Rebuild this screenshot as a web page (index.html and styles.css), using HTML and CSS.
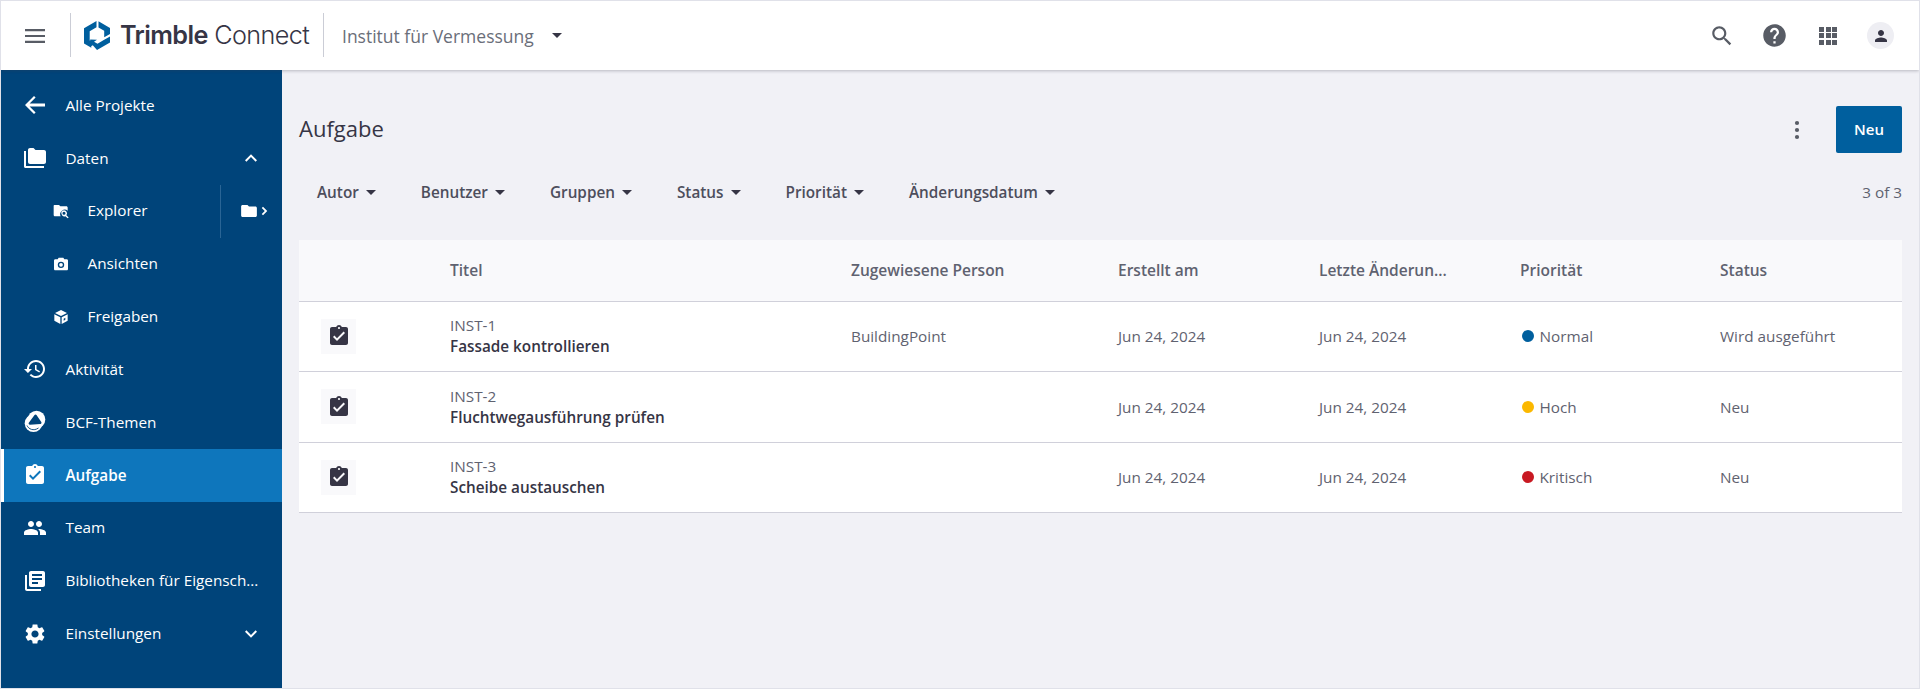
FILE: index.html
```html
<!DOCTYPE html>
<html lang="de">
<head>
<meta charset="utf-8">
<title>Trimble Connect</title>
<link rel="stylesheet" href="styles.css">
</head>
<body>
<div class="app">
  <header class="topbar">
    <button class="menu-btn" aria-label="Menü"><svg class="ic-24" viewBox="0 0 24 24"><path d="M2 19h20v-2.2H2V19zm0-5.9h20v-2.2H2v2.2zM2 5v2.2h20V5H2z"/></svg></button>
    <div class="brand">
      <svg class="logo" viewBox="0 0 26 29"><path d="M12.500 0 0 7.300v15.200l7.300 4.200v-6.300l-1.600-1V10.200l6.800-3.900zM14.500.3v6.100l5.700 3.300v6.600L26 13V7zM26 15.500l-5.800 3.300-6.700 3.900-3.500-2 3-2-6.800-.3v7.300l2.600-1.500L13 29l13-7.500z"/></svg>
      <span class="brand-text"><b>Trimble</b> Connect</span>
    </div>
    <div class="project"><span>Institut für Vermessung</span><i class="caret caret-lg"></i></div>
    <div class="top-actions">
      <svg class="ic-search" viewBox="0 0 24 24"><path d="M15.5 14h-.79l-.28-.27C15.41 12.59 16 11.11 16 9.5 16 5.91 13.09 3 9.5 3S3 5.91 3 9.5 5.91 16 9.5 16c1.61 0 3.09-.59 4.23-1.57l.27.28v.79l5 4.99L20.49 19l-4.99-5zm-6 0C7.01 14 5 11.99 5 9.5S7.01 5 9.5 5 14 7.01 14 9.5 11.99 14 9.5 14z"/></svg>
      <svg class="ic-help" viewBox="0 0 24 24"><path d="M12 2C6.48 2 2 6.48 2 12s4.48 10 10 10 10-4.48 10-10S17.52 2 12 2zm1 17h-2v-2h2v2zm2.07-7.75l-.9.92C13.45 12.9 13 13.5 13 15h-2v-.5c0-1.1.45-2.1 1.17-2.83l1.24-1.26c.37-.36.59-.86.59-1.41 0-1.1-.9-2-2-2s-2 .9-2 2H8c0-2.21 1.79-4 4-4s4 1.79 4 4c0 .88-.36 1.68-.93 2.25z"/></svg>
      <div class="apps-grid"><i></i><i></i><i></i><i></i><i></i><i></i><i></i><i></i><i></i></div>
      <div class="avatar"><svg viewBox="0 0 24 24"><path d="M12 12c2.21 0 4-1.79 4-4s-1.79-4-4-4-4 1.79-4 4 1.79 4 4 4zm0 2c-2.67 0-8 1.34-8 4v2h16v-2c0-2.66-5.33-4-8-4z"/></svg></div>
    </div>
  </header>

  <nav class="sidebar">
    <a class="nav-item"><svg class="nav-ic" viewBox="0 0 24 24"><path d="M22 10.6H6.6l6-6L11 3 2 12l9 9 1.6-1.6-6-6H22z"/></svg><span class="nav-label">Alle Projekte</span></a>
    <a class="nav-item"><svg class="nav-ic" viewBox="0 0 24 24"><path d="M1 5v15.5C1 21.3 1.7 22 2.5 22H21v-2H3V5zM7 2C5.9 2 5 2.9 5 4v12c0 1.1.9 2 2 2h14c1.1 0 2-.9 2-2V6c0-1.1-.9-2-2-2h-8.5l-2-2z"/></svg><span class="nav-label">Daten</span><svg class="chev" viewBox="0 0 24 24"><path d="M12 7l-8 8 1.900 1.900 6.100-6.100 6.100 6.100L20 15z"/></svg></a>
    <a class="nav-item sub explorer">
      <svg class="sub-ic" viewBox="0 0 24 24"><path fill-rule="evenodd" d="M2 3h7l2 2h9c1 0 2 1 2 2v4.500a7 7 0 0 0-10.600 8.500H3c-1 0-2-1-2-2V4c0-.6.4-1 1-1zM16.500 11a4.500 4.500 0 0 1 3.600 7.200L23.500 21.600 22 23l-3.400-3.300A4.500 4.500 0 1 1 16.500 11zm0 2.200a2.300 2.300 0 1 0 0 4.600 2.300 2.300 0 0 0 0-4.600z"/></svg>
      <span class="nav-label">Explorer</span>
      <span class="tree-toggle"><svg class="tree-folder" viewBox="0 0 24 24"><path d="M10 4H3.500C2.300 4 1.500 4.900 1.500 6v12c0 1.100.8 2 2 2h17c1.200 0 2-.9 2-2V8c0-1.100-.8-2-2-2H12z"/></svg><svg class="tree-chev" viewBox="0 0 24 24"><path d="M8 3.500 5.500 6l6 6-6 6L8 20.500 16.500 12z"/></svg></span>
    </a>
    <a class="nav-item sub"><svg class="sub-ic" viewBox="0 0 24 24"><path fill-rule="evenodd" d="M8.500 2.500 7 5H3.500C2.300 5 1.500 5.900 1.500 7v12.500c0 1.100.8 2 2 2h17c1.200 0 2-.9 2-2V7c0-1.100-.8-2-2-2H17l-1.500-2.500zM12 8.500a4.800 4.800 0 1 1 0 9.600 4.800 4.800 0 0 1 0-9.600zm0 2a2.800 2.800 0 1 0 0 5.600 2.800 2.800 0 0 0 0-5.600z"/></svg><span class="nav-label">Ansichten</span></a>
    <a class="nav-item sub"><svg class="sub-ic" viewBox="0 0 24 24"><path d="M12 1.500 3 6l9 4.500L21 6zM2 7.800v10L11 22.500V12.300zM22 7.800 13 12.300V22.500l9-4.700zM16 14.500l2.500-1.300v3l-2.500 1.300z"/></svg><span class="nav-label">Freigaben</span></a>
    <a class="nav-item"><svg class="nav-ic" viewBox="0 0 24 24"><path d="M13 3c-4.970 0-9 4.030-9 9H1l3.890 3.890.07.14L9 12H6c0-3.870 3.130-7 7-7s7 3.130 7 7-3.130 7-7 7c-1.930 0-3.680-.79-4.940-2.060l-1.420 1.420C8.270 19.990 10.510 21 13 21c4.970 0 9-4.030 9-9s-4.030-9-9-9zm-1 5v5l4.280 2.540.72-1.210-3.500-2.080V8H12z"/></svg><span class="nav-label">Aktivität</span></a>
    <a class="nav-item"><svg class="nav-ic" viewBox="0 0 24 24"><circle class="bcf-fill" cx="13.500" cy="9.500" r="8.800"/><circle class="bcf-fill" cx="10.500" cy="13.200" r="8.800"/><path class="bcf-line" d="M4 15.500c1.500 3.500 6.500 6 11.500 2.500"/><path class="bcf-hole" d="M12.500 5.800 17.300 12.800 6.800 13.500z"/></svg><span class="nav-label">BCF-Themen</span></a>
    <a class="nav-item active"><svg class="nav-ic" viewBox="0 0 24 24"><path d="M19 3h-4.180C14.400 1.840 13.300 1 12 1c-1.300 0-2.400.84-2.820 2H5c-1.100 0-2 .9-2 2v14c0 1.100.9 2 2 2h14c1.100 0 2-.9 2-2V5c0-1.100-.9-2-2-2zm-7 0c.55 0 1 .45 1 1s-.45 1-1 1-1-.45-1-1 .45-1 1-1zm-2 14l-4-4 1.410-1.410L10 14.170l6.590-6.590L18 9l-8 8z"/></svg><span class="nav-label">Aufgabe</span></a>
    <a class="nav-item"><svg class="nav-ic" viewBox="0 0 24 24"><path d="M16 11c1.660 0 2.990-1.340 2.990-3S17.660 5 16 5c-1.660 0-3 1.340-3 3s1.340 3 3 3zm-8 0c1.660 0 2.990-1.340 2.990-3S9.660 5 8 5C6.340 5 5 6.340 5 8s1.340 3 3 3zm0 2c-2.330 0-7 1.170-7 3.500V19h14v-2.500c0-2.330-4.670-3.500-7-3.500zm8 0c-.29 0-.62.02-.97.05 1.160.84 1.970 1.970 1.970 3.450V19h6v-2.500c0-2.330-4.670-3.500-7-3.500z"/></svg><span class="nav-label">Team</span></a>
    <a class="nav-item"><svg class="nav-ic" viewBox="0 0 24 24"><path d="M4 6H2v14c0 1.100.9 2 2 2h14v-2H4V6zm16-4H8c-1.100 0-2 .9-2 2v12c0 1.100.9 2 2 2h12c1.100 0 2-.9 2-2V4c0-1.100-.9-2-2-2zm-1 9H9V9h10v2zm-4 4H9v-2h6v2zm4-8H9V5h10v2z"/></svg><span class="nav-label">Bibliotheken für Eigensch...</span></a>
    <a class="nav-item"><svg class="nav-ic" viewBox="0 0 24 24"><path d="M19.140 12.940c.04-.3.06-.61.06-.94 0-.32-.02-.64-.07-.94l2.030-1.580c.18-.14.23-.41.12-.61l-1.920-3.320c-.12-.22-.37-.29-.59-.22l-2.390.96c-.5-.38-1.030-.7-1.620-.94l-.36-2.540c-.04-.24-.24-.41-.48-.41h-3.840c-.24 0-.43.17-.47.41l-.36 2.540c-.59.24-1.130.57-1.620.94l-2.390-.96c-.22-.08-.47 0-.59.22L2.740 8.870c-.12.21-.08.47.12.61l2.030 1.580c-.05.3-.09.63-.09.94s.02.64.07.94l-2.030 1.580c-.18.14-.23.41-.12.61l1.920 3.320c.12.22.37.29.59.22l2.390-.96c.5.38 1.030.7 1.620.94l.36 2.540c.05.24.24.41.48.41h3.840c.24 0 .44-.17.47-.41l.36-2.540c.59-.24 1.130-.56 1.620-.94l2.390.96c.22.08.47 0 .59-.22l1.920-3.320c.12-.22.07-.47-.12-.61l-2.010-1.580zM12 15.600c-1.980 0-3.600-1.620-3.600-3.600s1.620-3.600 3.600-3.600 3.600 1.620 3.600 3.600-1.620 3.600-3.600 3.600z"/></svg><span class="nav-label">Einstellungen</span><svg class="chev" viewBox="0 0 24 24"><path d="M12 17l-8-8 1.900-1.900 6.100 6.100 6.100-6.100L20 9z"/></svg></a>
  </nav>

  <main class="content">
    <div class="page-head">
      <h1>Aufgabe</h1>
      <div class="page-actions">
        <svg class="kebab" viewBox="0 0 6 20"><circle cx="3" cy="3" r="2.100"/><circle cx="3" cy="10" r="2.100"/><circle cx="3" cy="17" r="2.100"/></svg>
        <button class="btn-new">Neu</button>
      </div>
    </div>
    <div class="filters">
      <span class="filter">Autor<i class="caret"></i></span>
      <span class="filter">Benutzer<i class="caret"></i></span>
      <span class="filter">Gruppen<i class="caret"></i></span>
      <span class="filter">Status<i class="caret"></i></span>
      <span class="filter">Priorität<i class="caret"></i></span>
      <span class="filter">Änderungsdatum<i class="caret"></i></span>
      <span class="count">3 of 3</span>
    </div>
    <div class="table">
      <div class="row head"><span></span><span>Titel</span><span>Zugewiesene Person</span><span>Erstellt am</span><span>Letzte Änderun...</span><span>Priorität</span><span>Status</span></div>
      <div class="row">
        <span class="tile"><svg viewBox="0 0 24 24"><path d="M19 3h-4.180C14.400 1.840 13.300 1 12 1c-1.300 0-2.400.84-2.820 2H5c-1.100 0-2 .9-2 2v14c0 1.100.9 2 2 2h14c1.100 0 2-.9 2-2V5c0-1.100-.9-2-2-2zm-7 0c.55 0 1 .45 1 1s-.45 1-1 1-1-.45-1-1 .45-1 1-1zm-2 14l-4-4 1.410-1.410L10 14.170l6.590-6.590L18 9l-8 8z"/></svg></span>
        <span class="title"><span>INST-1</span><b>Fassade kontrollieren</b></span>
        <span>BuildingPoint</span><span>Jun 24, 2024</span><span>Jun 24, 2024</span>
        <span class="prio"><i class="dot normal"></i>Normal</span><span>Wird ausgeführt</span>
      </div>
      <div class="row">
        <span class="tile"><svg viewBox="0 0 24 24"><path d="M19 3h-4.180C14.400 1.840 13.300 1 12 1c-1.300 0-2.400.84-2.820 2H5c-1.100 0-2 .9-2 2v14c0 1.100.9 2 2 2h14c1.100 0 2-.9 2-2V5c0-1.100-.9-2-2-2zm-7 0c.55 0 1 .45 1 1s-.45 1-1 1-1-.45-1-1 .45-1 1-1zm-2 14l-4-4 1.410-1.410L10 14.170l6.590-6.590L18 9l-8 8z"/></svg></span>
        <span class="title"><span>INST-2</span><b>Fluchtwegausführung prüfen</b></span>
        <span></span><span>Jun 24, 2024</span><span>Jun 24, 2024</span>
        <span class="prio"><i class="dot high"></i>Hoch</span><span>Neu</span>
      </div>
      <div class="row">
        <span class="tile"><svg viewBox="0 0 24 24"><path d="M19 3h-4.180C14.400 1.840 13.300 1 12 1c-1.300 0-2.400.84-2.820 2H5c-1.100 0-2 .9-2 2v14c0 1.100.9 2 2 2h14c1.100 0 2-.9 2-2V5c0-1.100-.9-2-2-2zm-7 0c.55 0 1 .45 1 1s-.45 1-1 1-1-.45-1-1 .45-1 1-1zm-2 14l-4-4 1.410-1.410L10 14.170l6.590-6.590L18 9l-8 8z"/></svg></span>
        <span class="title"><span>INST-3</span><b>Scheibe austauschen</b></span>
        <span></span><span>Jun 24, 2024</span><span>Jun 24, 2024</span>
        <span class="prio"><i class="dot crit"></i>Kritisch</span><span>Neu</span>
      </div>
    </div>
  </main>
</div>
</body>
</html>
```
FILE: styles.css
```css
* { box-sizing: border-box; }
html, body { margin: 0; height: 100%; }
body {
  font-family: "Open Sans", "Noto Sans", sans-serif;
  font-size: 15.3px;
  color: #363545;
  overflow: hidden;
}
.app {
  height: 689px;
  border: 1px solid #e0e1e9;
  display: grid;
  grid-template-columns: 281px 1fr;
  grid-template-rows: 69px 1fr;
  background: #f1f1f6;
  overflow: hidden;
}
.topbar {
  grid-column: 1 / -1;
  position: relative;
  z-index: 2;
  background: #fff;
  display: flex;
  align-items: center;
  box-shadow: 0 1px 3px rgba(54, 53, 69, .3);
}
.menu-btn {
  width: 69px;
  height: 100%;
  padding: 0 0 0 22px;
  margin: 0;
  border: 0;
  background: none;
  display: flex;
  align-items: center;
}
.ic-24 { width: 24px; height: 24px; fill: #585c65; }
.brand {
  height: 44px;
  margin-top: -1px;
  border-left: 1px solid #cbcdd6;
  border-right: 1px solid #cbcdd6;
  width: 254px;
  padding-left: 13px;
  display: flex;
  align-items: center;
  gap: 10px;
}
.logo { width: 26px; height: 29px; fill: #005f9e; flex: none; }
.brand-text {
  font-family: Inter, Roboto, sans-serif;
  font-size: 25.2px;
  font-weight: 300;
  letter-spacing: -.6px;
  color: #363545;
  white-space: nowrap;
}
.brand-text b { font-weight: 600; }
.project {
  margin-left: 18px;
  display: flex;
  align-items: center;
  font-size: 17.5px;
  color: #6a6e79;
}
.caret {
  display: inline-block;
  width: 0;
  height: 0;
  border-left: 5px solid transparent;
  border-right: 5px solid transparent;
  border-top: 5px solid #363545;
  margin-left: 7px;
}
.caret-lg { margin-left: 18px; }
.top-actions {
  margin-left: auto;
  display: flex;
  align-items: center;
  padding-right: 25px;
}
.ic-search { width: 26px; height: 26px; fill: #585c65; margin-right: 26px; }
.ic-help { width: 27px; height: 27px; fill: #585c65; margin-right: 31px; }
.apps-grid {
  width: 18px;
  height: 18px;
  display: grid;
  grid-template-columns: repeat(3, 5px);
  grid-auto-rows: 5px;
  gap: 1.5px;
  margin-right: 30px;
}
.apps-grid i { background: #585c65; }
.avatar {
  width: 27px;
  height: 27px;
  border-radius: 50%;
  background: #eeeef3;
  display: flex;
  align-items: center;
  justify-content: center;
}
.avatar svg { width: 18px; height: 18px; fill: #363545; }

.sidebar {
  background: #00447a;
  padding-top: 9px;
  color: #fff;
  display: flex;
  flex-direction: column;
}
.nav-item {
  height: 52.8px;
  flex: none;
  display: flex;
  align-items: center;
  padding-left: 22px;
  padding-right: 23px;
  position: relative;
}
.nav-ic { width: 24px; height: 24px; fill: #fff; flex: none; margin-right: 18.5px; }
.nav-label { white-space: nowrap; padding-bottom: 1px; }
.chev { width: 18px; height: 18px; fill: #fff; margin-left: auto; margin-right: -1px; }
.sub { padding-left: 52px; }
.sub-ic { width: 16px; height: 16px; fill: #fff; flex: none; margin-right: 18.5px; }
.tree-toggle {
  position: absolute;
  left: 219px;
  top: 0;
  height: 53px;
  width: 62px;
  border-left: 1px solid #2a6595;
  display: flex;
  align-items: center;
  padding-left: 19px;
  gap: 1px;
}
.tree-folder { width: 18px; height: 18px; fill: #fff; }
.tree-chev { width: 12px; height: 12px; fill: #fff; }
.active {
  height: 53px;
  background: #0e76bc;
  border-left: 3px solid #fff;
  padding-left: 19px;
  font-weight: 600;
}
.bcf-fill { fill: #fff; }
.bcf-line { fill: none; stroke: #00447a; stroke-width: .9; }
.bcf-hole { fill: #00447a; stroke: #00447a; stroke-width: 2.4; stroke-linejoin: round; }

.content { padding: 0 17px; min-width: 0; }
.page-head {
  height: 47px;
  margin-top: 36px;
  display: flex;
  align-items: center;
  justify-content: space-between;
}
h1 { margin: 0 0 3px; font-size: 22px; font-weight: 400; color: #363545; }
.page-actions { display: flex; align-items: center; }
.kebab { width: 6px; height: 20px; fill: #585c65; margin-right: 36px; }
.btn-new {
  width: 66px;
  height: 47px;
  padding: 0 0 2px;
  border: 0;
  border-radius: 2px;
  background: #005f9e;
  color: #fff;
  font: 600 15px "Open Sans", sans-serif;
}
.filters {
  display: flex;
  align-items: center;
  gap: 45px;
  height: 40px;
  margin-top: 19px;
  padding-left: 18px;
  font-weight: 600;
}
.filter { display: flex; align-items: center; color: #4d4e5c; }
.count { margin-left: auto; font-weight: 400; color: #5f6270; }

.table { margin-top: 28px; }
.row {
  display: grid;
  grid-template-columns: 151px 401px 267px 201px 201px 200px 1fr;
  align-items: center;
  height: 71px;
  padding-bottom: 1px;
  background: #fff;
  border-bottom: 1px solid #d0d0da;
  color: #5f6270;
}
.head {
  height: 62px;
  padding-bottom: 2px;
  background: #f9f9fb;
  font-size: 15.5px;
  font-weight: 600;
}
.head + .row, .row:last-child { height: 70px; }
.tile {
  width: 35px;
  height: 35px;
  margin-left: 22px;
  background: #f9f9fb;
  display: flex;
  align-items: center;
  justify-content: center;
}
.tile svg { width: 24px; height: 24px; fill: #363545; }
.title { display: flex; flex-direction: column; line-height: 21px; }
.title b { font-weight: 600; color: #363545; }
.prio { display: flex; align-items: center; padding-left: 1.5px; }
.dot { width: 12px; height: 12px; border-radius: 50%; margin-right: 6px; }
.normal { background: #005f9e; }
.high { background: #fbb800; }
.crit { background: #c81922; }
```
